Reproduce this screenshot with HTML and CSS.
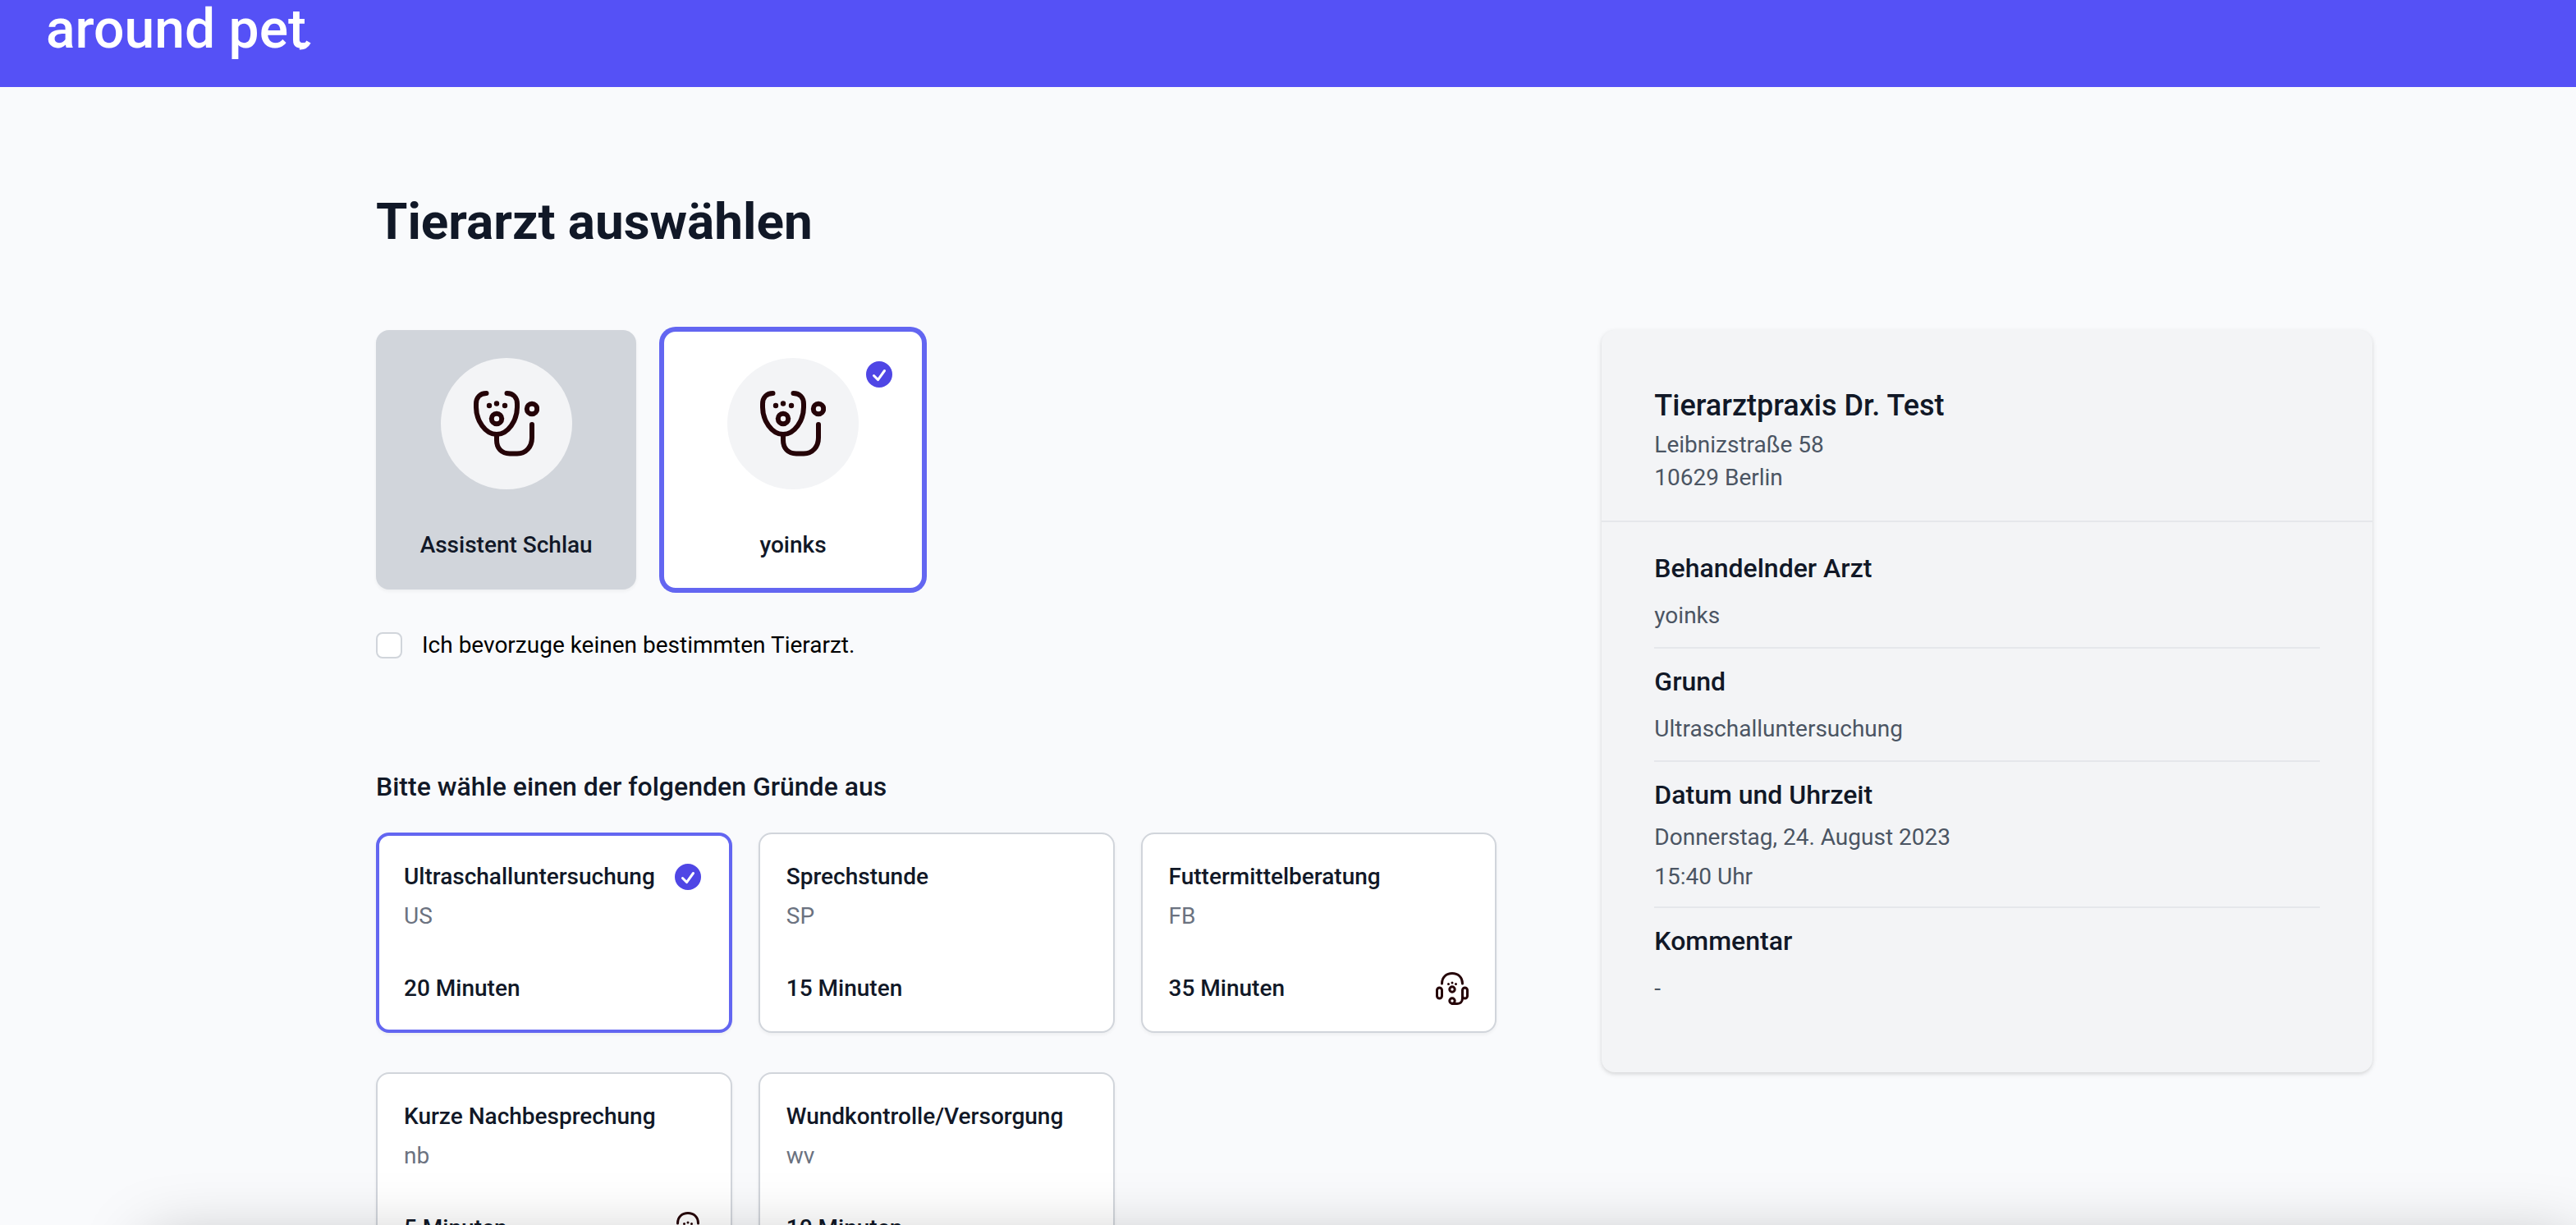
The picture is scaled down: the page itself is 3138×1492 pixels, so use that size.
FILE: index.html
```html
<!DOCTYPE html>
<html lang="de">
<head>
<meta charset="utf-8">
<meta name="viewport" content="width=device-width, initial-scale=1">
<title>Tierarzt auswählen – around pet</title>
<link rel="stylesheet" href="styles.css">
</head>
<body>
<svg class="sprite" aria-hidden="true">
  <symbol id="stethoscope" viewBox="0 0 80 80">
    <g fill="none" stroke="currentColor" stroke-width="6" stroke-linecap="round">
      <path d="M15.500 3C8 3 3 8 3 16V20C3 36 14 53 28 53S53 36 53 20V16C53 8 48 3 40.500 3"/>
      <path d="M28 53V60C28 70 34 76.500 44 76.500H53C64 76.500 71 68 71 57V41"/>
      <circle cx="28" cy="34" r="6.200"/>
      <circle cx="71" cy="22" r="6.200"/>
    </g>
    <g fill="currentColor"><circle cx="19" cy="18" r="3.200"/><circle cx="28" cy="15.500" r="3.200"/><circle cx="38" cy="18" r="3.200"/></g>
  </symbol>
  <symbol id="headset" viewBox="0 0 40 40">
    <g fill="none" stroke="currentColor" stroke-width="3" stroke-linecap="round">
      <path d="M7.500 14C7.500 6 13 1.500 20 1.500S32.500 6 32.500 14"/>
      <rect x="1.500" y="19" width="6" height="13" rx="3"/>
      <rect x="32.500" y="19" width="6" height="13" rx="3"/>
      <circle cx="20" cy="21" r="3.200"/>
      <circle cx="20" cy="35" r="3.200"/>
      <path d="M20 38.500H26C30 38.500 32.500 36 32.500 32V29"/>
    </g>
    <g fill="currentColor"><circle cx="15.500" cy="14.500" r="1.500"/><circle cx="20" cy="13" r="1.500"/><circle cx="24.500" cy="14.500" r="1.500"/></g>
  </symbol>
  <symbol id="check" viewBox="0 0 20 20">
    <path fill="currentColor" fill-rule="evenodd" clip-rule="evenodd" d="M10 18a8 8 0 100-16 8 8 0 000 16zm3.857-9.809a.75.75 0 00-1.214-.882l-3.483 4.790-1.880-1.880a.75.75 0 10-1.060 1.061l2.500 2.500a.75.75 0 001.137-.089l4-5.500z"/>
  </symbol>
</svg>

<header class="topbar">
  <a class="logo" href="#">around pet<svg class="logo-tail" viewBox="0 0 16 16" aria-hidden="true"><path d="M2 11.500Q9 12 13 5" fill="none" stroke="currentColor" stroke-width="6"/></svg></a>
</header>

<main class="page">
  <h1 class="page-title">Tierarzt auswählen</h1>
  <div class="columns">
    <div class="choices">
      <section class="vets">
        <button type="button" class="vet vet-muted">
          <span class="avatar"><svg class="avatar-icon"><use href="#stethoscope"/></svg></span>
          <span class="vet-name">Assistent Schlau</span>
        </button>
        <button type="button" class="vet vet-selected" aria-pressed="true">
          <span class="avatar"><svg class="avatar-icon"><use href="#stethoscope"/></svg></span>
          <span class="vet-name">yoinks</span>
          <svg class="check vet-check"><use href="#check"/></svg>
        </button>
      </section>
      <div class="preference">
        <input class="checkbox" type="checkbox" id="no-preference">
        <label for="no-preference">Ich bevorzuge keinen bestimmten Tierarzt.</label>
      </div>

      <h2 class="reasons-title">Bitte wähle einen der folgenden Gründe aus</h2>
      <section class="reasons">
        <button type="button" class="reason reason-selected" aria-pressed="true">
          <span class="reason-row"><span>Ultraschalluntersuchung</span><svg class="check"><use href="#check"/></svg></span>
          <span class="code">US</span>
          <span class="reason-row duration">20 Minuten</span>
        </button>
        <button type="button" class="reason">
          <span class="reason-row">Sprechstunde</span>
          <span class="code">SP</span>
          <span class="reason-row duration">15 Minuten</span>
        </button>
        <button type="button" class="reason">
          <span class="reason-row">Futtermittelberatung</span>
          <span class="code">FB</span>
          <span class="reason-row duration"><span>35 Minuten</span><svg class="headset"><use href="#headset"/></svg></span>
        </button>
        <button type="button" class="reason">
          <span class="reason-row">Kurze Nachbesprechung</span>
          <span class="code">nb</span>
          <span class="reason-row duration"><span>5 Minuten</span><svg class="headset"><use href="#headset"/></svg></span>
        </button>
        <button type="button" class="reason">
          <span class="reason-row">Wundkontrolle/Versorgung</span>
          <span class="code">wv</span>
          <span class="reason-row duration">10 Minuten</span>
        </button>
      </section>
    </div>

    <aside class="summary">
      <div class="practice">
        <h2 class="practice-name">Tierarztpraxis Dr. Test</h2>
        <p>Leibnizstraße 58</p>
        <p>10629 Berlin</p>
      </div>
      <dl class="details">
        <div class="detail"><dt>Behandelnder Arzt</dt><dd>yoinks</dd></div>
        <div class="detail"><dt>Grund</dt><dd>Ultraschalluntersuchung</dd></div>
        <div class="detail detail-date"><dt>Datum und Uhrzeit</dt><dd>Donnerstag, 24. August 2023</dd><dd>15:40 Uhr</dd></div>
        <div class="detail"><dt>Kommentar</dt><dd>-</dd></div>
      </dl>
    </aside>
  </div>
</main>
<div class="bottom-shade"></div>
</body>
</html>
```
FILE: styles.css
```css
*, *::before, *::after { box-sizing: border-box; }

html { overflow: hidden; }

body {
  margin: 0;
  background: #f9fafc;
  color: #111827;
  font: 400 28px/40px Roboto, "Liberation Sans", sans-serif;
}

h1, h2, p, dl, dt, dd { margin: 0; }

button { font: inherit; color: inherit; cursor: pointer; }

.sprite { display: none; }

.topbar {
  height: 106px;
  padding: 0 56px;
  background: #5551f6;
}

.logo {
  position: relative;
  display: inline-block;
  color: #fff;
  font-size: 66px;
  font-weight: 500;
  line-height: 72px;
}

.logo { text-decoration: none; }

/* Upturned end of the final "t" */
.logo-tail {
  position: absolute;
  right: -6px;
  bottom: 10px;
  width: 16px;
  height: 16px;
}

.page {
  max-width: 2770px;
  margin: 0 auto;
  padding: 124px 64px 0 274px;
}

.page-title {
  margin-bottom: 92px;
  font-size: 62px;
  font-weight: 700;
  line-height: 80px;
}

.columns {
  display: grid;
  grid-template-columns: repeat(12, minmax(0, 1fr));
  column-gap: 128px;
  align-items: start;
}

.choices { grid-column: span 7; }
.summary { grid-column: span 5; }

.vets {
  display: grid;
  grid-template-columns: repeat(4, minmax(0, 1fr));
  gap: 32px;
}

.vet {
  position: relative;
  display: flex;
  flex-direction: column;
  align-items: center;
  gap: 48px;
  padding: 32px;
  border: 2px solid transparent;
  border-radius: 16px;
  background: #fff;
  font-weight: 500;
}

.vet-muted {
  border-color: #d1d5db;
  background: #d1d5db;
  box-shadow: 0 2px 4px rgba(0, 0, 0, 0.05);
}

.vet-selected {
  border-color: #6366f1;
  box-shadow: 0 0 0 4px #6366f1;
}

.avatar {
  display: grid;
  place-items: center;
  width: 160px;
  height: 160px;
  border-radius: 50%;
  background: #f3f4f6;
  color: #250408;
}

.avatar-icon { width: 80px; height: 80px; }

.check { flex: none; width: 40px; height: 40px; color: #4f46e5; }

.vet-check { position: absolute; top: 32px; right: 32px; }

.preference {
  display: flex;
  align-items: center;
  gap: 24px;
  margin-top: 48px;
  color: #000;
}

.checkbox {
  appearance: none;
  width: 32px;
  height: 32px;
  margin: 0;
  border: 2px solid #d1d5db;
  border-radius: 8px;
  background: #fff;
}

.reasons-title {
  margin-top: 128px;
  font-size: 32px;
  font-weight: 500;
  line-height: 48px;
}

.reasons {
  display: grid;
  grid-template-columns: repeat(3, minmax(0, 1fr));
  gap: 48px 32px;
  margin-top: 32px;
}

.reason {
  display: flex;
  flex-direction: column;
  padding: 32px;
  border: 2px solid #d1d5db;
  border-radius: 16px;
  background: #fff;
  box-shadow: 0 2px 4px rgba(0, 0, 0, 0.05);
  text-align: left;
}

.reason-selected {
  padding: 30px;
  border: 4px solid #6366f1;
}

.reason-row {
  display: flex;
  justify-content: space-between;
  align-items: center;
  width: 100%;
  font-weight: 500;
}

.code { margin-top: 8px; color: #6b7280; }

.duration { margin-top: 48px; }

.headset { width: 40px; height: 40px; color: #250408; }

.summary {
  border-radius: 16px;
  background: #f3f4f6;
  box-shadow: 0 2px 6px rgba(0, 0, 0, 0.1), 0 2px 4px rgba(0, 0, 0, 0.06);
  color: #4b5563;
}

.practice {
  padding: 64px 64px 32px;
  border-bottom: 2px solid #e5e7eb;
}

.practice-name {
  color: #111827;
  font-size: 36px;
  font-weight: 500;
  line-height: 56px;
}

.details { padding: 16px 64px 64px; }

.detail { padding: 16px 0 14px; }

.detail + .detail { border-top: 2px solid #e5e7eb; }

.detail dt {
  margin-bottom: 10px;
  color: #111827;
  font-size: 32px;
  font-weight: 500;
  line-height: 48px;
}

.detail dd { line-height: 48px; }

.detail-date { padding-bottom: 12px; }

.detail-date dt { margin-bottom: 4px; }

/* Soft shade along the lower window edge */
.bottom-shade {
  position: fixed;
  right: 0;
  bottom: -220px;
  left: 180px;
  height: 200px;
  box-shadow: 0 0 80px rgba(0, 0, 0, 0.26);
  pointer-events: none;
}
```
